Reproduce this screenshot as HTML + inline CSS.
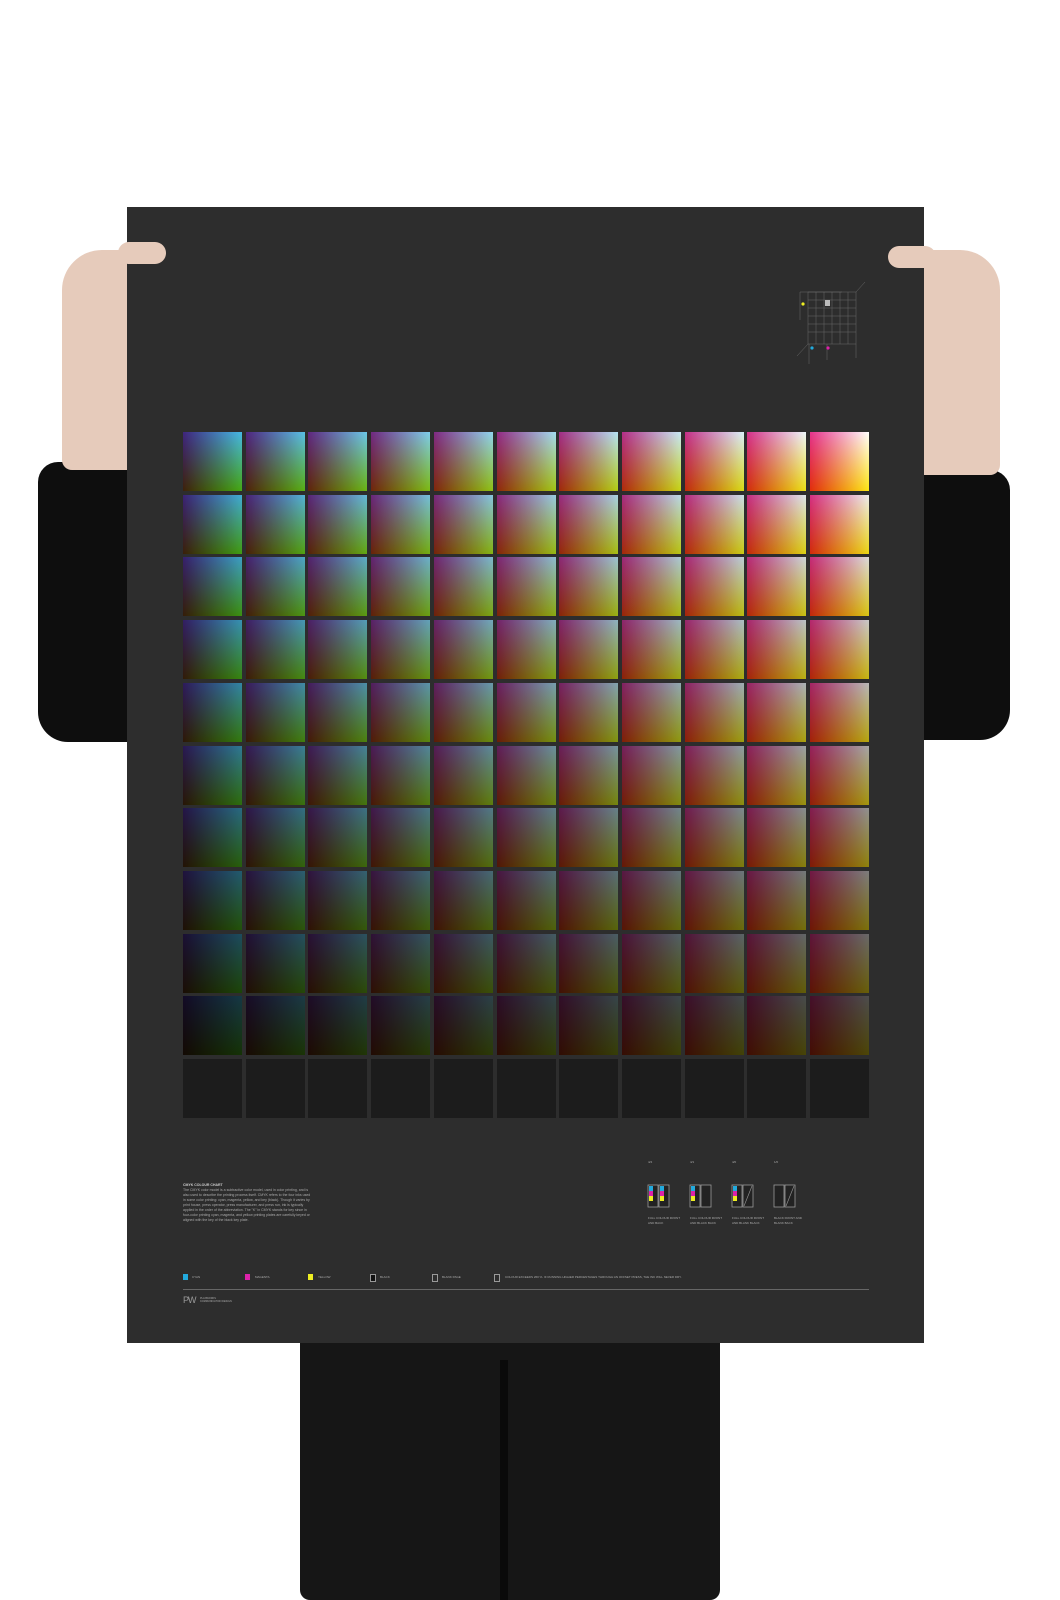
<!DOCTYPE html>
<html><head><style>
body{margin:0;width:1060px;height:1600px;background:#fff;position:relative;overflow:hidden;font-family:"Liberation Sans",sans-serif}
.a{position:absolute}
.cell{position:absolute;width:59px;height:59px;background-blend-mode:multiply}
.t{color:#aaa;font-size:3px;line-height:5px}
</style></head><body>
<div class="a" style="left:38px;top:462px;width:100px;height:280px;background:#0e0e0e;border-radius:20px 0 0 30px"></div>
<div class="a" style="left:918px;top:470px;width:92px;height:270px;background:#0e0e0e;border-radius:0 20px 30px 0"></div>
<div class="a" style="left:62px;top:250px;width:75px;height:220px;background:#e6cbbb;border-radius:40px 10px 0 10px"></div>
<div class="a" style="left:922px;top:250px;width:78px;height:225px;background:#e6cbbb;border-radius:10px 40px 10px 0"></div>
<div class="a" style="left:300px;top:1340px;width:420px;height:260px;background:#161616;border-radius:0 0 10px 10px"></div>
<div class="a" style="left:500px;top:1360px;width:8px;height:240px;background:#0a0a0a"></div>
<div class="a" style="left:127px;top:207px;width:797px;height:1136px;background:#2d2d2d"></div>
<div class="a" style="left:118px;top:242px;width:48px;height:22px;background:#e6cbbb;border-radius:12px"></div>
<div class="a" style="left:888px;top:246px;width:48px;height:22px;background:#e6cbbb;border-radius:12px"></div>
<svg class="a" style="left:785px;top:280px" width="90" height="90">
<g stroke="#777" stroke-width="0.4" fill="none">
<path d="M15 12H57M15 12V40"/>
<rect x="23" y="12" width="48" height="52"/>
<path d="M23 20H71M23 28H71M23 36H71M23 44H71M23 52H71M31 12V64M39 12V64M47 12V64M55 12V64M63 12V64"/>
<path d="M71 12L80 2M23 64L12 76M24 64V84M42 64V80M71 64V78"/>
</g>
<rect x="40" y="20" width="5" height="6" fill="#bbb"/>
<circle cx="18" cy="24" r="1.6" fill="#ee2"/>
<circle cx="27" cy="68" r="1.6" fill="#2ad"/>
<circle cx="43" cy="68" r="1.6" fill="#d2a"/>
</svg>
<div id="g"></div>
<script>
var h='';
var F=[1,0.93,0.86,0.79,0.72,0.65,0.57,0.49,0.41,0.3];
for(var r=0;r<11;r++)for(var c=0;c<11;c++){
var x=183+c*62.7,y=432+r*62.7;
if(r==10){h+='<div class="cell" style="left:'+x+'px;top:'+y+'px;background:#1c1c1c"></div>';continue;}
var cy=(10-c)/10, f=F[r];
var cr=Math.round(255*(1-cy)+70*cy),cg=Math.round(255*(1-cy)+185*cy),cb=Math.round(255*(1-cy)+228*cy);
var k=Math.round(255*f);
h+='<div class="cell" style="left:'+x+'px;top:'+y+'px;background-image:linear-gradient(rgb('+k+','+k+','+k+'),rgb('+k+','+k+','+k+')),linear-gradient(rgb('+cr+','+cg+','+cb+'),rgb('+cr+','+cg+','+cb+')),linear-gradient(to right,rgb(228,50,140),#fff),linear-gradient(#fff,rgb(252,232,20))"></div>';
}
document.getElementById('g').innerHTML=h;
</script>
<div class="a t" style="left:183px;top:1183px;width:130px;font-size:3.5px">
<b style="color:#ccc">CMYK COLOUR CHART</b><br>The CMYK color model is a subtractive color model, used in color printing, and is also used to describe the printing process itself. CMYK refers to the four inks used in some color printing: cyan, magenta, yellow, and key (black). Though it varies by print house, press operator, press manufacturer, and press run, ink is typically applied in the order of the abbreviation. The "K" in CMYK stands for key since in four-color printing cyan, magenta, and yellow printing plates are carefully keyed or aligned with the key of the black key plate.
</div>
<svg class="a" style="left:645px;top:1180px" width="230" height="40">
<g stroke="#999" stroke-width="0.8" fill="#222">
<rect x="3" y="5" width="10" height="22"/><rect x="14" y="5" width="10" height="22"/>
<rect x="45" y="5" width="10" height="22"/><rect x="56" y="5" width="10" height="22"/>
<rect x="87" y="5" width="10" height="22"/><rect x="98" y="5" width="10" height="22"/>
<rect x="129" y="5" width="10" height="22"/><rect x="140" y="5" width="10" height="22"/>
</g>
<g><rect x="4" y="6" width="4" height="5" fill="#2ad"/><rect x="4" y="11" width="4" height="5" fill="#d2a"/><rect x="4" y="16" width="4" height="5" fill="#ee2"/>
<rect x="15" y="6" width="4" height="5" fill="#2ad"/><rect x="15" y="11" width="4" height="5" fill="#d2a"/><rect x="15" y="16" width="4" height="5" fill="#ee2"/>
<rect x="46" y="6" width="4" height="5" fill="#2ad"/><rect x="46" y="11" width="4" height="5" fill="#d2a"/><rect x="46" y="16" width="4" height="5" fill="#ee2"/>
<rect x="88" y="6" width="4" height="5" fill="#2ad"/><rect x="88" y="11" width="4" height="5" fill="#d2a"/><rect x="88" y="16" width="4" height="5" fill="#ee2"/></g>
<path d="M99 26L107 6M141 26L149 6" stroke="#999" stroke-width="0.6"/>
</svg>
<div class="a t" style="left:648px;top:1160px;font-size:3px">4/4</div>
<div class="a t" style="left:690px;top:1160px;font-size:3px">4/1</div>
<div class="a t" style="left:732px;top:1160px;font-size:3px">4/0</div>
<div class="a t" style="left:774px;top:1160px;font-size:3px">1/0</div>
<div class="a t" style="left:648px;top:1216px;width:36px">FULL COLOUR FRONT AND BACK</div>
<div class="a t" style="left:690px;top:1216px;width:36px">FULL COLOUR FRONT AND BLACK BACK</div>
<div class="a t" style="left:732px;top:1216px;width:36px">FULL COLOUR FRONT AND BLANK BLACK</div>
<div class="a t" style="left:774px;top:1216px;width:36px">BLACK FRONT AND BLANK BACK</div>
<div class="a" style="left:183px;top:1274px;width:5px;height:6px;background:#2ad"></div><div class="a t" style="left:192px;top:1275px">CYAN</div>
<div class="a" style="left:245px;top:1274px;width:5px;height:6px;background:#d2a"></div><div class="a t" style="left:255px;top:1275px">MAGENTA</div>
<div class="a" style="left:308px;top:1274px;width:5px;height:6px;background:#ee2"></div><div class="a t" style="left:318px;top:1275px">YELLOW</div>
<div class="a" style="left:370px;top:1274px;width:4px;height:6px;border:0.5px solid #999;background:#111"></div><div class="a t" style="left:380px;top:1275px">BLACK</div>
<div class="a" style="left:432px;top:1274px;width:4px;height:6px;border:0.5px solid #999"></div><div class="a t" style="left:442px;top:1275px">BLANK PAGE</div>
<div class="a" style="left:494px;top:1274px;width:4px;height:6px;border:0.5px solid #999"></div><div class="a t" style="left:505px;top:1275px">COLOUR EXCEEDS 260 %. IF RUNNING HIGHER PERCENTAGES THROUGH AN OFFSET PRESS, THE INK WILL NEVER DRY.</div>
<div class="a" style="left:183px;top:1289px;width:686px;height:1px;background:#666"></div>
<div class="a" style="left:183px;top:1295px;color:#999;font-size:9px;letter-spacing:-1px">PW</div>
<div class="a t" style="left:200px;top:1297px;font-size:2.5px;line-height:3px">PLANWORKS<br>COMMUNICATION DESIGN</div>
</body></html>
